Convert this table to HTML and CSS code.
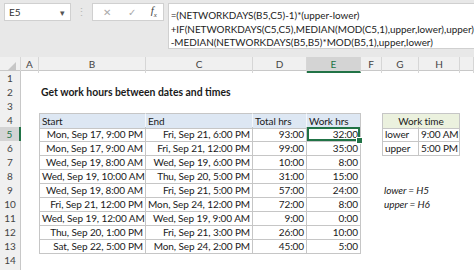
FILE: index.html
```html
<!doctype html>
<html lang="en">
  <head>
    <meta charset="UTF-8" />
    <meta name="viewport" content="width=device-width, initial-scale=1.0" />
    <title>Work hours</title>
    <link rel="stylesheet" href="styles.css">
  </head>
  <body>
    <!-- Name box and formula bar -->
    <div class="toolbar">
      <div class="namebox">
        <span>E5</span>
        <span class="drop">&#9662;</span>
      </div>
      <div class="grip">&#8942;</div>
      <div class="fx-buttons">
        <span class="cancel">&#10005;</span>
        <span class="enter">&#10003;</span>
        <span class="fx">f<sub>x</sub></span>
      </div>
      <div class="formula">
        <div>=(NETWORKDAYS(B5,C5)-1)*(upper-lower)</div>
        <div>+IF(NETWORKDAYS(C5,C5),MEDIAN(MOD(C5,1),upper,lower),upper)</div>
        <div>-MEDIAN(NETWORKDAYS(B5,B5)*MOD(B5,1),upper,lower)</div>
      </div>
    </div>

    <div class="sheet">
      <!-- Column headers -->
      <div class="row col-head">
        <div class="corner"><span class="tri"></span></div>
        <div>A</div><div>B</div><div>C</div><div>D</div>
        <div class="active">E</div>
        <div>F</div><div>G</div><div>H</div><div></div>
      </div>

      <div class="row">
        <div class="rh">1</div>
      </div>
      <div class="row">
        <div class="rh">2</div>
        <div></div><div class="title">Get work hours between dates and times</div>
      </div>
      <div class="row">
        <div class="rh">3</div>
      </div>
      <div class="row">
        <div class="rh">4</div>
        <div></div>
        <div class="t th first top">Start</div>
        <div class="t th top">End</div>
        <div class="t th top">Total hrs</div>
        <div class="t th top last">Work hrs</div>
        <div></div>
        <div class="w wh first top">Work time</div>
      </div>
      <div class="row">
        <div class="rh active">5</div>
        <div></div>
        <div class="t num first">Mon, Sep 17, 9:00 PM</div>
        <div class="t num">Fri, Sep 21, 6:00 PM</div>
        <div class="t num">93:00</div>
        <div class="t num sel">32:00<span class="handle"></span></div>
        <div></div>
        <div class="w first">lower</div>
        <div class="w num">9:00 AM</div>
      </div>
      <div class="row">
        <div class="rh">6</div>
        <div></div>
        <div class="t num first">Mon, Sep 17, 9:00 AM</div>
        <div class="t num">Fri, Sep 21, 12:00 PM</div>
        <div class="t num">99:00</div>
        <div class="t num">35:00</div>
        <div></div>
        <div class="w first">upper</div>
        <div class="w num">5:00 PM</div>
      </div>
      <div class="row">
        <div class="rh">7</div>
        <div></div>
        <div class="t num first">Wed, Sep 19, 8:00 AM</div>
        <div class="t num">Wed, Sep 19, 6:00 PM</div>
        <div class="t num">10:00</div>
        <div class="t num">8:00</div>
      </div>
      <div class="row">
        <div class="rh">8</div>
        <div></div>
        <div class="t num first">Wed, Sep 19, 10:00 AM</div>
        <div class="t num">Thu, Sep 20, 5:00 PM</div>
        <div class="t num">31:00</div>
        <div class="t num">15:00</div>
      </div>
      <div class="row">
        <div class="rh">9</div>
        <div></div>
        <div class="t num first">Wed, Sep 19, 8:00 AM</div>
        <div class="t num">Fri, Sep 21, 5:00 PM</div>
        <div class="t num">57:00</div>
        <div class="t num">24:00</div>
        <div></div>
        <div class="note">lower = H5</div>
      </div>
      <div class="row">
        <div class="rh">10</div>
        <div></div>
        <div class="t num first">Fri, Sep 21, 12:00 PM</div>
        <div class="t num">Mon, Sep 24, 12:00 PM</div>
        <div class="t num">72:00</div>
        <div class="t num">8:00</div>
        <div></div>
        <div class="note">upper = H6</div>
      </div>
      <div class="row">
        <div class="rh">11</div>
        <div></div>
        <div class="t num first">Wed, Sep 19, 12:00 AM</div>
        <div class="t num">Wed, Sep 19, 9:00 AM</div>
        <div class="t num">9:00</div>
        <div class="t num">0:00</div>
      </div>
      <div class="row">
        <div class="rh">12</div>
        <div></div>
        <div class="t num first">Thu, Sep 20, 1:00 PM</div>
        <div class="t num">Fri, Sep 21, 3:00 PM</div>
        <div class="t num">26:00</div>
        <div class="t num">10:00</div>
      </div>
      <div class="row">
        <div class="rh">13</div>
        <div></div>
        <div class="t num first">Sat, Sep 22, 5:00 PM</div>
        <div class="t num">Mon, Sep 24, 2:00 PM</div>
        <div class="t num">45:00</div>
        <div class="t num">5:00</div>
      </div>
      <div class="row">
        <div class="rh">14</div>
      </div>
      <div class="row">
        <div class="rh"></div>
      </div>
    </div>
  </body>
</html>
```

FILE: styles.css
```css
body {
  margin: 0;
  background: #ffffff;
  font-family: Lato, 'Liberation Sans', Arial, sans-serif;
  color: #1a1a1a;
  overflow: hidden;
}

/* Formula bar strip */
.toolbar {
  display: flex;
  align-items: flex-start;
  height: 57px;
  padding: 3px 0 0 4px;
  box-sizing: border-box;
  background: #e8e8e8;
}

.namebox {
  display: flex;
  align-items: center;
  justify-content: space-between;
  width: 68px;
  height: 18px;
  padding: 0 5px 0 4px;
  box-sizing: border-box;
  background: #ffffff;
  border: 1px solid #d0d0d0;
  font-size: 10px;
  color: #333;
}

.namebox .drop {
  font-size: 9px;
  color: #555;
}

.grip {
  width: 21px;
  height: 18px;
  text-align: center;
  line-height: 18px;
  font-size: 11px;
  color: #b8b8b8;
}

.fx-buttons {
  display: flex;
  align-items: center;
  width: 73px;
  height: 18px;
  padding-left: 10px;
  box-sizing: border-box;
  background: #ffffff;
  border: 1px solid #d0d0d0;
  color: #aaa;
  font-size: 10px;
}

.fx-buttons .cancel {
  width: 25px;
}

.fx-buttons .enter {
  width: 23px;
}

.fx-buttons .fx {
  font-family: 'Liberation Serif', serif;
  font-style: italic;
  font-size: 11px;
  color: #444;
}

.fx-buttons .fx sub {
  font-size: 7px;
}

.formula {
  flex: 1;
  height: 46px;
  margin-left: 4px;
  padding: 5px 0 0 2px;
  box-sizing: border-box;
  background: #ffffff;
  border: 1px solid #d0d0d0;
  border-right: none;
  font-size: 9.9px;
  line-height: 13.5px;
  color: #222;
  white-space: nowrap;
}

/* Worksheet grid */
.sheet {
  --cols: 21px 18px 107px 107px 54px 54px 21px 37px 41px 1fr;
}

.row {
  display: grid;
  grid-template-columns: var(--cols);
  height: 14px;
  font-size: 10px;
  letter-spacing: -0.1px;
  line-height: 14px;
}

.row > div {
  position: relative;
  white-space: nowrap;
  padding: 0 2px;
  box-sizing: border-box;
}

.col-head {
  background: #f0f0f0;
  border-bottom: 1px solid #c8c8c8;
  box-sizing: border-box;
  color: #444;
  letter-spacing: 0;
}

.col-head > div {
  text-align: center;
  border-right: 1px solid #d6d6d6;
}

.col-head > div.active {
  background: #d4d4d4;
  border-bottom: 2px solid #217346;
  color: #217346;
}

.corner {
  display: flex;
  align-items: flex-end;
  justify-content: flex-end;
}

.tri {
  width: 0;
  height: 0;
  margin: 0 2px 2px 0;
  border-left: 9px solid transparent;
  border-bottom: 9px solid #c6c6c6;
}

.rh {
  background: #f0f0f0;
  border-right: 1px solid #c8c8c8;
  border-bottom: 1px solid #e0e0e0;
  text-align: center;
  color: #444;
  letter-spacing: 0;
}

.rh.active {
  background: #d4d4d4;
  border-right: 2px solid #217346;
  color: #217346;
}

.title {
  grid-column: span 4;
  font-weight: 700;
  font-size: 10.4px;
  letter-spacing: 0;
}

/* Data table B4:E13 */
.t {
  border-right: 1px solid #c6c6c6;
  border-bottom: 1px solid #c6c6c6;
}

.t.first,
.w.first {
  border-left: 1px solid #c6c6c6;
}

.top {
  border-top: 1px solid #c6c6c6;
}

.th {
  background: #dde7f3;
  border-right-color: #f4f7fb;
}

.th.last {
  border-right-color: #c6c6c6;
}

.num {
  text-align: right;
  padding-right: 3px;
}

.sel {
  box-shadow: inset 0 0 0 2px #217346;
}

.handle {
  position: absolute;
  right: -3px;
  bottom: -3px;
  width: 5px;
  height: 5px;
  background: #217346;
  border: 1px solid #ffffff;
  z-index: 2;
}

/* Work time lookup G4:H6 */
.w {
  border-right: 1px solid #c6c6c6;
  border-bottom: 1px solid #c6c6c6;
}

.wh {
  grid-column: span 2;
  text-align: center;
  background: #ebf1de;
}

.note {
  grid-column: span 3;
  font-style: italic;
}
```
